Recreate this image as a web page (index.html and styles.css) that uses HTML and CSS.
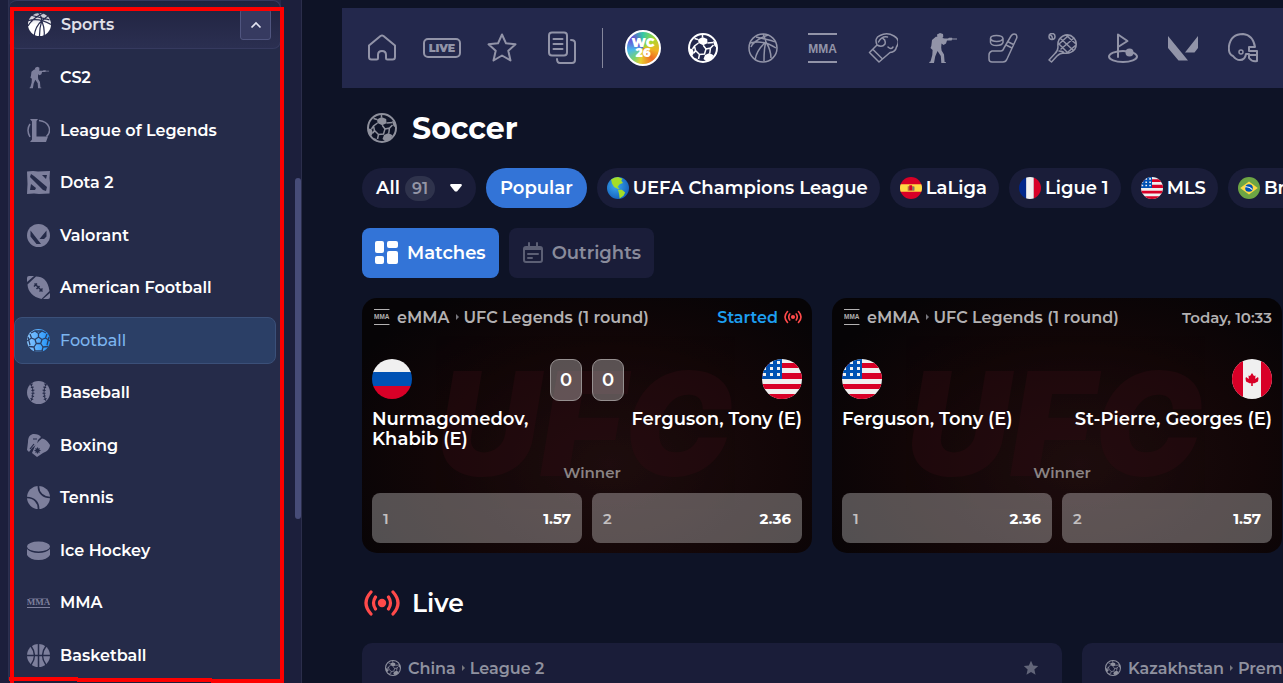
FILE: index.html
```
<!DOCTYPE html>
<html lang="en">
<head>
    <meta charset="UTF-8">
    <meta name="viewport" content="width=device-width, initial-scale=1.0">
    <title>Soccer</title>
    <link rel="stylesheet" href="styles.css">
</head>
<body>
    <!-- icon sprite -->
    <svg class="sprite" aria-hidden="true">
        <defs>
            <clipPath id="round"><circle cx="20" cy="20" r="20"/></clipPath>
            <linearGradient id="blue" x1="0" y1="0" x2="1" y2="0">
                <stop offset="0" stop-color="#8cc8ff"/><stop offset="1" stop-color="#1d92fb"/>
            </linearGradient>
            <linearGradient id="white" x1="0" y1="0" x2="0" y2="1">
                <stop offset="0" stop-color="#b9bac8"/><stop offset=".5" stop-color="#fff"/>
            </linearGradient>
            <radialGradient id="sea" cx=".4" cy=".4" r=".6">
                <stop offset="0" stop-color="#3ba9ee"/><stop offset="1" stop-color="#1765c0"/>
            </radialGradient>
        </defs>
        <symbol id="soccer" viewBox="0 0 30 30">
            <circle cx="15" cy="15" r="14" fill="none" stroke="currentColor" stroke-width="2"/>
            <path fill="currentColor" d="M10 6.500 14.500 4l4.700 2 .3 4.200-4.300 2L10.500 10zM17 22l4.500-2 4 2.200-2 4-5 2.300-3-2.500zM1 15.500l3.500.5 1.500 4-2 3-2-2zM25 8l3 1 1.200 6-2.700-2zM5 24.500l4.500 1.500v2.500z"/>
            <path fill="none" stroke="currentColor" stroke-width="1.500" d="M10.500 10 6.500 13l-2 3M10 6.500 6.500 5.500M19.500 10 25.500 9.500M15.200 12.200 18 16l-1.500 5-5 .5L7.500 17.500M6.500 13l1 4.500L6 20M18 16l4.500-1 3-3M22.500 15l-.7 5M11.500 21.500l-1 4.500M14.500 4V1.500"/>
        </symbol>
        <symbol id="basket" viewBox="0 0 30 30">
            <g fill="none" stroke="currentColor" stroke-width="1.500">
                <circle cx="15" cy="15" r="14"/>
                <path d="M2 10c8-2 17-1 26 5M8 4c8 2 16 3 19 5M20 2C12 5 5 9 3 14M15 1c2 4 3 7 3 10M18 9c-6 5-10 12-11 18M18 9c-2 5-2 12-2 19M18 9c3 5 5 10 5 16"/>
            </g>
        </symbol>
        <symbol id="mma" viewBox="0 0 30 30">
            <path fill="currentColor" d="M0 0h29v2H0zM0 28h29v2H0z"/>
            <text class="mma-text" x="14.500" y="19.500" text-anchor="middle">MMA</text>
        </symbol>
        <symbol id="shooter" viewBox="0 0 28 30">
            <path fill="currentColor" d="M8 1.500 11 0l3 1 .3 2.500L13.500 5l2 .5H19l1-.7h3l.3.8h4.700v.8h-5l-.4 1H18l-1 3-2.500 1.500-2-1.500-.3 4 .4 3 2.400 4 .6 7.500h1.200V30h-4.500l-.5-7-3.300-5-2.300 5.500L5 30H.3v-1l1.200-.6 1.800-6.500.3-5L1.500 15l.8-2 .7-6 3.800-3.200h1.500z"/>
        </symbol>
        <symbol id="cast" viewBox="0 0 36 26">
            <circle cx="18" cy="13" r="4.200" fill="currentColor"/>
            <path fill="none" stroke="currentColor" stroke-width="3.200" stroke-linecap="round" d="M11.500 7q-4 6 0 12M24.500 7q4 6 0 12M7 2q-10 11 0 22M29 2q10 11 0 22"/>
        </symbol>
        <symbol id="star" viewBox="0 0 30 30">
            <path d="M15 1.500l4 8.800 9.500 1-7.200 6.500 2.200 9.700-8.500-5-8.500 5 2.200-9.700-7.200-6.500 9.500-1z"/>
        </symbol>
        <symbol id="usa" viewBox="0 0 40 40">
            <g clip-path="url(#round)">
                <path fill="#f0f0f0" d="M0 0h40v40H0z"/>
                <path fill="#d80027" d="M0 4h40v5H0zM0 14h40v6H0zM0 25h40v5H0zM0 35h40v5H0z"/>
                <path fill="#0052b4" d="M0 0h20v20H0z"/>
                <path fill="none" stroke="#f0f0f0" stroke-width="3" stroke-dasharray="3 4" d="M8 3.500h12M1 9.500h19M1 15.500h19"/>
            </g>
        </symbol>
        <symbol id="canada" viewBox="0 0 40 40">
            <g clip-path="url(#round)">
                <path fill="#f0f0f0" d="M0 0h40v40H0z"/>
                <path fill="#d80027" d="M0 0h11v40H0zM29 0h11v40H29zM20 14l2 3 1.500-.5-.3 3.500 2.800-2 .5 1.500-.5 3-3.500 1.700h-1.700V27h-1.600v-2.800h-1.700L14 22.500l-.5-3 .5-1.500 2.800 2-.3-3.500 1.500.5z"/>
            </g>
        </symbol>
        <symbol id="russia" viewBox="0 0 40 40">
            <g clip-path="url(#round)"><path fill="#f0f0f0" d="M0 0h40v14H0z"/><path fill="#0052b4" d="M0 13h40v14H0z"/><path fill="#d80027" d="M0 27h40v13H0z"/></g>
        </symbol>
        <symbol id="spain" viewBox="0 0 40 40">
            <g clip-path="url(#round)"><path fill="#d80027" d="M0 0h40v40H0z"/><path fill="#ffda44" d="M0 13h40v14H0z"/><path fill="#b5763a" d="M14 17h12v8H14z"/><path fill="#d80027" d="M17 15h5v9h-5z"/><path fill="#777" d="M23 18h3v6h-3z"/></g>
        </symbol>
        <symbol id="france" viewBox="0 0 40 40">
            <g clip-path="url(#round)"><path fill="#00268a" d="M0 0h14v40H0z"/><path fill="#f0f0f0" d="M13 0h14v40H13z"/><path fill="#d80027" d="M27 0h13v40H27z"/></g>
        </symbol>
        <symbol id="brazil" viewBox="0 0 40 40">
            <g clip-path="url(#round)"><path fill="#6da544" d="M0 0h40v40H0z"/><path fill="#ffda44" d="M20 8l16 12-16 12L4 20z"/><circle cx="20" cy="20" r="7" fill="#0052b4"/><path fill="none" stroke="#f0f0f0" stroke-width="2" d="M13 18q8-1 13 5"/></g>
        </symbol>
        <symbol id="globe" viewBox="0 0 40 40">
            <circle cx="20" cy="20" r="20" fill="url(#sea)"/>
            <path fill="#a4dd28" d="M7 5Q13 0 20 0l8 3-2 4 3 4-6 2-4 5 4 3-3 1-7-4-4-6-1-5zM20 23h7l6 5-3 6-7 5-1-8z"/>
        </symbol>
    </svg>

    <aside class="sidebar">
        <div class="panel">
            <div class="panel-header">
                <svg class="ico" viewBox="0 0 30 30"><circle cx="15" cy="15" r="15" fill="url(#white)"/><path fill="none" stroke="#2a2e50" stroke-width="1.600" d="M0 10c10-3 20-1 30 5M5 3c8 3 18 4 23 6M20 0C12 4 4 10 0 17M14 0c3 4 4 7 4 10M18 10C12 15 9 22 8 30M18 10c-2 6-3 13-3 20M18 10c2 5 4 12 3 20M18 10l8-6"/></svg>
                <span>Sports</span>
                <button class="toggle" aria-label="Collapse sports"><svg width="12" height="8" viewBox="0 0 12 8"><path fill="none" stroke="#e4e5f2" stroke-width="1.700" d="M1.500 6.500 6 2l4.500 4.500"/></svg></button>
            </div>
            <ul class="sports">
                <li><a href="#"><svg class="ico" viewBox="-2 0 28 30"><use href="#shooter" width="26" height="30"/></svg>CS2</a></li>
                <li><a href="#"><svg class="ico" viewBox="0 0 23 23"><path fill="currentColor" d="M3 0h8l-1.500 2v15.500H21L19 23H3l2-2.500V2.500z"/><path fill="none" stroke="currentColor" stroke-width="1.500" d="M3 5q-4 6 0 13M12 1.500c11 1 13 11 7.500 16"/></svg>League of Legends</a></li>
                <li><a href="#"><svg class="ico" viewBox="0 0 23 23"><path fill="currentColor" fill-rule="evenodd" d="M0 .5 6 0l5 .5L23 0l-.5 7 .5 5-.5 10.500L12 23l-5-.5L0 23l.5-10zM4 3 3 6l13 13 3 1 1-4L7 5zM15 4l4 4 1-4zM4 13l-1 6h5l1-2z"/></svg>Dota 2</a></li>
                <li><a href="#"><svg class="ico" viewBox="0 0 23 23"><circle cx="11.500" cy="11.500" r="11.500" fill="currentColor"/><path fill="#252b49" d="M3.500 6.500v6l6 7.500h4.500zM19.500 6.500v6l-2.500 2.500h-4.500z"/></svg>Valorant</a></li>
                <li><a href="#"><svg class="ico" viewBox="0 0 23 23"><path fill="currentColor" d="M0 6V2q0-2 2-2h5zM23 17v4q0 2-2 2h-5zM9 0.500c7 0 12 4 13.500 14.500l-8 8C6 21 1 16 .5 8.500z"/><path fill="none" stroke="#252b49" stroke-width="1.500" d="m7.500 7.500 8 8M7 10.500 10 7.500M9.500 13l3-3M12.500 15.500l3-3"/></svg>American Football</a></li>
                <li><a class="active" href="#"><svg class="ico" viewBox="0 0 23 23"><circle cx="11.500" cy="11.500" r="11.500" fill="url(#blue)"/><path fill="none" stroke="#2b3f66" stroke-width="1.300" d="m11.500 8 3.500 2.500-1.300 4H9.300L8 10.500zM11.500 8V4.500L8 2M11.500 4.500 15 2M15 10.500l3.500-1.500L20 5M18.500 9l4.500 3M13.700 14.500l2.300 3.500-1 4M16 18l5-.5M9.300 14.500 7 18l1 4M7 18l-5-.5M8 10.500 4.500 9 3 5M4.500 9 0 12M4 4 8 2h7l4 2M1 8l2 8M22 8l-2 8M7 22h9"/></svg>Football</a></li>
                <li><a href="#"><svg class="ico" viewBox="0 0 23 23"><circle cx="11.500" cy="11.500" r="11.500" fill="currentColor"/><path fill="none" stroke="#252b49" stroke-width="1" d="M4 3q4 8.500 0 17M19 3q-4 8.500 0 17"/><path fill="none" stroke="#252b49" stroke-width="3" stroke-dasharray="1 2" d="M4 3q4 8.500 0 17M19 3q-4 8.500 0 17"/></svg>Baseball</a></li>
                <li><a href="#"><svg class="ico" viewBox="0 0 23 23"><path fill="currentColor" d="M1 8C1 2 4 0 7 0q5 0 7 3l-3 3-1 4-5 4-3 4-2-2zM12 7l3-2.500q4 0 8 6.500 0 5-7 8l-6 4-5-4 3-7z"/><path fill="none" stroke="#252b49" stroke-width="1.200" d="M3 15l4-5M10.500 13.500v6M7.500 16.500h6M8.500 14.500l4 4M12.500 14.500l-4 4M6 5h4"/></svg>Boxing</a></li>
                <li><a href="#"><svg class="ico" viewBox="0 0 23 23"><circle cx="11.500" cy="11.500" r="11.500" fill="currentColor"/><path fill="none" stroke="#252b49" stroke-width="1.700" d="M11.500 0c-.5 7 5 11.500 12 11.500M0 11.500c7 0 12 5 11.500 12"/></svg>Tennis</a></li>
                <li><a href="#"><svg class="ico" viewBox="0 0 23 23"><ellipse cx="11.500" cy="7.500" rx="11.500" ry="5" fill="currentColor"/><path fill="currentColor" d="M0 10q4 4 11.500 4T23 10v6q-3 5-11.500 5T0 16z"/></svg>Ice Hockey</a></li>
                <li><a href="#"><svg class="ico" viewBox="0 0 23 23"><text class="mma-small" x="11.500" y="14" text-anchor="middle">MMA</text><path fill="currentColor" d="M0 16h23v1H0zM2 7h19v.6H2z"/></svg>MMA</a></li>
                <li><a href="#"><svg class="ico" viewBox="0 0 23 23"><circle cx="11.500" cy="11.500" r="11.500" fill="currentColor"/><path fill="none" stroke="#252b49" stroke-width="1.500" d="M11.500 0v23M0 11.500h23M4 2q7 9.500 0 19M19 2q-7 9.500 0 19"/></svg>Basketball</a></li>
            </ul>
        </div>
        <span class="thumb"></span>
        <span class="frame"></span>
        <svg class="frame-bottom" viewBox="0 0 275 7"><path fill="#fe0000" d="M0 1h69v4H0zM68 2h135v4H68zM202 3h73v4h-73z"/></svg>
    </aside>

    <main class="main">
        <nav class="topbar">
            <a href="#" aria-label="Home"><svg width="30" height="30" viewBox="0 0 30 30"><path class="line" d="M2 12.500 13.500 3q1.500-1 3 0L28 12.500V24q0 2.500-2.500 2.500h-5q-1.500 0-1.500-1.500v-3q0-4-4-4t-4 4v3q0 1.500-1.500 1.500h-5Q2 26.500 2 24z"/></svg></a>
            <a href="#" aria-label="Live"><svg width="38" height="20" viewBox="0 0 38 20"><rect class="line" x="1" y="1" width="36" height="18" rx="4"/><text class="live-text" x="19" y="14" text-anchor="middle">LIVE</text></svg></a>
            <a href="#" aria-label="Favourites"><svg class="line" width="30" height="30"><use href="#star"/></svg></a>
            <a href="#" aria-label="Bets"><svg width="30" height="34" viewBox="0 0 30 34"><path class="line" d="M5 1.500h12q3 0 3 3v17q0 3-3 3H5q-3 0-3-3v-17q0-3 3-3zM24 9q4 0 4 3v17q0 3-3 3H13q-3 0-3-4M6.500 8h9M6.500 13h9M6.500 18h9"/></svg></a>
            <span class="divider"></span>
            <a href="#" aria-label="World Cup"><span class="wc"><span>WC</span><span>26</span></span></a>
            <a href="#" aria-label="Soccer" class="current"><svg width="30" height="30"><use href="#soccer"/></svg></a>
            <a href="#" aria-label="Basketball"><svg width="30" height="30"><use href="#basket"/></svg></a>
            <a href="#" aria-label="MMA"><svg width="30" height="30"><use href="#mma"/></svg></a>
            <a href="#" aria-label="Boxing"><svg width="30" height="30" viewBox="0 0 30 30"><path class="thin" d="M1.500 19.500 9 12Q6 5 12 2.500 19-1 26 3t2.500 11q-1 5-6.500 5.500L11 29zM9 12q5 3 8-1 1-4-2-5.500M10.500 9q3-6 9-5M5 16.500l9 9M20 14q3 3 5 0"/></svg></a>
            <a href="#" aria-label="CS2"><svg width="28" height="30"><use href="#shooter"/></svg></a>
            <a href="#" aria-label="Ice hockey"><svg width="30" height="30" viewBox="0 0 30 30"><path class="thin" d="M23 3q2-3 5-1.500 1.500 2 .5 4L19 26q-1 3-4 3H4q-3 0-3-3v-4q0-3 3-4h9q2 0 3-3zM20.500 9l5 2.500M19 12.500l5 2.500M2.500 5.500q0-3 6-3t6.500 3v4q-1 3-6.500 3t-6-3zM2.500 5.500q1 3 6.200 3T15 5.500"/></svg></a>
            <a href="#" aria-label="Tennis"><svg width="30" height="30" viewBox="0 0 30 30"><path class="thin" d="M10 14Q9 6 15 3q6-3 11 2 4 5 1 11-4 5-11 4-4 0-7 3l-5.500 6L1 27l5.500-6Q10 18 10 14zM11 18q4 0 5 2M13 16 26 5M11 11l9-8M20 19l8-7M13 6l12 11M11 11l8 8M19 3l9 8"/><path class="thin" d="M1 3.500q0-3 3-3t3 3-3 3-3-3M2.500 2q2 1 2 4"/></svg></a>
            <a href="#" aria-label="Golf"><svg width="30" height="30" viewBox="0 0 30 30"><ellipse class="line" cx="15" cy="23.500" rx="14" ry="5.500"/><path class="line" d="M10 24V1.500L19.500 8 10 14"/><circle cx="21.500" cy="19.500" r="4" fill="currentColor"/></svg></a>
            <a href="#" aria-label="Valorant"><svg width="30" height="30" viewBox="0 0 30 30"><path fill="currentColor" d="M0 3v12l10.500 12.500H20zM30 3v12l-3.500 4.500H17z"/></svg></a>
            <a href="#" aria-label="American football"><svg width="30" height="30" viewBox="0 0 30 30"><path class="line" d="M5 23Q0 21 1 13 3 1 15 1q10 1 12 13h-6v4h8v10q-5 1-8-3v-4h-3q-1 6-6 6-4 0-7-4zM21 22h8"/><circle class="thin" cx="13" cy="19" r="2"/></svg></a>
        </nav>

        <div class="content">
            <h1><svg width="30" height="30"><use href="#soccer"/></svg>Soccer</h1>

            <div class="chips">
                <button class="chip all">All <span class="count">91</span><svg class="caret" width="12" height="8" viewBox="0 0 12 8"><path fill="currentColor" d="M1 0h10q1.500.5.500 2L7 7.500H5L.5 2Q-.5.500 1 0z"/></svg></button>
                <button class="chip selected">Popular</button>
                <button class="chip league"><svg width="22" height="22"><use href="#globe"/></svg>UEFA Champions League</button>
                <button class="chip league"><svg width="22" height="22"><use href="#spain"/></svg>LaLiga</button>
                <button class="chip league"><svg width="22" height="22"><use href="#france"/></svg>Ligue 1</button>
                <button class="chip league"><svg width="22" height="22"><use href="#usa"/></svg>MLS</button>
                <button class="chip league"><svg width="22" height="22"><use href="#brazil"/></svg>Brasileiro</button>
            </div>

            <div class="tabs">
                <button class="tab selected"><svg width="24" height="24" viewBox="0 0 24 24"><g fill="currentColor"><rect width="9" height="12" rx="2"/><rect y="15" width="9" height="8" rx="2"/><rect x="12" width="11" height="7" rx="2"/><rect x="12" y="10" width="11" height="13" rx="2"/></g></svg>Matches</button>
                <button class="tab"><svg width="22" height="22" viewBox="0 0 22 22"><path class="line" d="M4 5h14q2 0 2 2v11q0 2-2 2H4q-2 0-2-2V7q0-2 2-2zM2 7h18M7 1v4M15 1v4M6 12h10M6 16h4"/></svg>Outrights</button>
            </div>

            <div class="matches">
                <article class="match">
                    <span class="mark" aria-hidden="true">UFC</span>
                    <div class="match-head">
                        <svg width="16" height="16"><use href="#mma"/></svg>
                        <span>eMMA</span><i class="arrow"></i><span>UFC Legends (1 round)</span>
                        <span class="started">Started<svg width="18" height="14"><use href="#cast"/></svg></span>
                    </div>
                    <div class="teams">
                        <div class="team"><svg width="40" height="40"><use href="#russia"/></svg><span>Nurmagomedov, Khabib (E)</span></div>
                        <div class="scores"><span>0</span><span>0</span></div>
                        <div class="team away"><svg width="40" height="40"><use href="#usa"/></svg><span>Ferguson, Tony (E)</span></div>
                    </div>
                    <div class="market">Winner</div>
                    <div class="odds">
                        <button><span>1</span><b>1.57</b></button>
                        <button><span>2</span><b>2.36</b></button>
                    </div>
                </article>
                <article class="match">
                    <span class="mark" aria-hidden="true">UFC</span>
                    <div class="match-head">
                        <svg width="16" height="16"><use href="#mma"/></svg>
                        <span>eMMA</span><i class="arrow"></i><span>UFC Legends (1 round)</span>
                        <span class="when">Today, 10:33</span>
                    </div>
                    <div class="teams">
                        <div class="team"><svg width="40" height="40"><use href="#usa"/></svg><span>Ferguson, Tony (E)</span></div>
                        <div class="team away"><svg width="40" height="40"><use href="#canada"/></svg><span>St-Pierre, Georges (E)</span></div>
                    </div>
                    <div class="market">Winner</div>
                    <div class="odds">
                        <button><span>1</span><b>2.36</b></button>
                        <button><span>2</span><b>1.57</b></button>
                    </div>
                </article>
            </div>

            <h2><svg width="36" height="26"><use href="#cast"/></svg>Live</h2>

            <div class="live">
                <section class="league-card">
                    <svg width="16" height="16"><use href="#soccer"/></svg>
                    <span>China</span><i class="arrow"></i><span>League 2</span>
                    <button class="fav" aria-label="Add to favourites"><svg width="16" height="16"><use href="#star"/></svg></button>
                </section>
                <section class="league-card">
                    <svg width="16" height="16"><use href="#soccer"/></svg>
                    <span>Kazakhstan</span><i class="arrow"></i><span>Premier League</span>
                </section>
            </div>
        </div>
    </main>
</body>
</html>
```
FILE: styles.css
```
* {
    box-sizing: border-box;
}
body {
    margin: 0;
    display: flex;
    height: 100vh;
    overflow: hidden;
    background: #0e1326;
    color: #fff;
    font-family: Montserrat, Inter, sans-serif;
    font-size: 16px;
    font-weight: 600;
}
a {
    color: inherit;
    text-decoration: none;
}
button {
    border: 0;
    padding: 0;
    color: inherit;
    font: inherit;
    cursor: pointer;
}
svg {
    display: block;
    flex: none;
}
.sprite {
    position: absolute;
    width: 0;
    height: 0;
}

/* sidebar */
.sidebar {
    position: relative;
    flex: none;
    width: 302px;
    padding: 0 20px 3px 8px;
    background: #1c1f3c;
    border-right: 1px solid #2b2e4b;
}
.panel {
    display: flex;
    flex-direction: column;
    height: 100%;
    background: #252b49;
    border-left: 1px solid #2c3050;
}
.panel-header {
    display: flex;
    align-items: center;
    height: 49px;
    padding: 0 9px 0 19px;
    gap: 10px;
    background: linear-gradient(#20233f, #2b2f51);
    border: 1px solid #363a5f;
    border-left: 0;
    border-radius: 8px;
    color: #e0e0e8;
}
.toggle {
    display: flex;
    align-items: center;
    justify-content: center;
    width: 31px;
    height: 31px;
    margin-left: auto;
    background: #363a60;
    border: 1px solid #50557f;
    border-radius: 3px;
}
.ico {
    width: 23px;
    height: 23px;
}
.sports {
    display: flex;
    flex: 1;
    flex-direction: column;
    justify-content: space-between;
    margin: 0;
    padding: 5px 5px 1px;
    list-style: none;
}
.sports a {
    display: flex;
    align-items: center;
    gap: 10px;
    height: 47px;
    padding: 0 12px;
    border: 1px solid transparent;
    border-radius: 8px;
}
.sports .ico {
    color: #7d7f9c;
}
.sports .active {
    background: #2b3f66;
    border-color: #3b5079;
    color: #7cb5ef;
    font-weight: 500;
}
.mma-small {
    fill: currentColor;
    font: 700 9px "Liberation Serif", serif;
}
.thumb {
    position: absolute;
    top: 178px;
    right: 0;
    width: 6px;
    height: 341px;
    background: #474c78;
    border-radius: 3px;
}
.frame {
    position: absolute;
    top: 7px;
    left: 10px;
    right: 17px;
    bottom: 0;
    border: 4px solid #fe0000;
    border-bottom: 0;
}
.frame-bottom {
    position: absolute;
    left: 9px;
    bottom: 0;
    width: 275px;
    height: 7px;
}

/* top navigation */
.main {
    flex: 1;
    min-width: 0;
    padding: 8px 0 0 40px;
    overflow: hidden;
}
.topbar {
    display: flex;
    align-items: center;
    height: 80px;
    padding-left: 10px;
    background: #23284c;
    color: #9294a8;
}
.topbar a {
    display: flex;
    flex: none;
    align-items: center;
    justify-content: center;
    width: 60px;
    height: 60px;
}
.topbar .current {
    color: #fff;
}
.divider {
    flex: none;
    width: 1px;
    height: 40px;
    margin: 0 10px;
    background: #85879c;
}
.line, .thin {
    fill: none;
    stroke: currentColor;
    stroke-width: 2px;
    stroke-linecap: round;
    stroke-linejoin: round;
}
.topbar .thin {
    stroke-width: 1.5px;
}
.live-text {
    fill: currentColor;
    font: 900 11px Montserrat, Inter, sans-serif;
}
.mma-text {
    fill: currentColor;
    font: 700 12px "Liberation Sans", sans-serif;
}
.wc {
    display: flex;
    flex-direction: column;
    align-items: center;
    justify-content: center;
    width: 36px;
    height: 36px;
    border: 2px solid #fff;
    border-radius: 50%;
    background: conic-gradient(from 0deg, #35c9a5, #a5d931, #f0b323 100deg, #ee6a22 140deg, #e9cf2f 190deg, #79d26f 220deg, #49b9e8 260deg, #6a46d5 310deg, #35c9a5);
    color: #fff;
    font: 900 12px/10px Montserrat, Inter, sans-serif;
}

/* content */
.content {
    padding-left: 20px;
}
h1, h2 {
    display: flex;
    align-items: center;
    margin: 0;
}
h1 {
    height: 80px;
    padding-left: 5px;
    gap: 15px;
    font-size: 30px;
    font-weight: 700;
}
h1 svg {
    color: #8e909c;
}
h2 {
    height: 90px;
    padding: 10px 0 0 2px;
    gap: 12px;
    font-size: 25px;
    font-weight: 600;
}
h2 svg {
    color: #ff4a4a;
}
.chips, .tabs {
    display: flex;
    gap: 10px;
    margin-bottom: 20px;
}
.chip {
    display: flex;
    flex: none;
    align-items: center;
    height: 40px;
    padding: 0 14px;
    background: #1a1d39;
    border-radius: 20px;
    font-size: 18px;
}
.league {
    gap: 4px;
    padding: 0 12px 0 10px;
}
.count {
    height: 25px;
    margin: 0 15px 0 5px;
    padding: 0 7px;
    background: #2f334c;
    border-radius: 13px;
    color: #9496a5;
    font-size: 16px;
    line-height: 25px;
}
.tab {
    display: flex;
    align-items: center;
    gap: 8px;
    height: 50px;
    padding: 0 13px;
    background: #1a1d39;
    border-radius: 8px;
    color: #898b9b;
    font-size: 18px;
}
.tab svg {
    color: #5c5f74;
}
.selected, .selected svg {
    color: #fff;
}
.selected {
    background: #3374d7;
}

/* match cards */
.matches, .live {
    display: flex;
    gap: 20px;
}
.match {
    position: relative;
    flex: 0 0 450px;
    padding: 9px 10px 10px;
    overflow: hidden;
    background: radial-gradient(ellipse at 55% 65%, #1e0d0e, #120607 50%, #060406 85%);
    border-radius: 15px;
}
.mark {
    position: absolute;
    top: 46px;
    left: 74px;
    color: #2b0b10;
    font: italic 900 144px/160px Inter, sans-serif;
    opacity: .5;
}
.match-head, .league-card {
    display: flex;
    align-items: center;
}
.match-head {
    position: relative;
    height: 20px;
    padding-left: 2px;
    color: #b3b1b2;
}
.match-head > svg, .league-card > svg {
    margin-right: 7px;
}
.arrow {
    margin: 0 5px 0 6px;
    border: 3px solid transparent;
    border-right: 0;
    border-left-color: #77767c;
}
.started, .when {
    display: flex;
    align-items: center;
    gap: 6px;
    margin-left: auto;
}
.when {
    font-size: 15px;
}
.started {
    color: #1d9ff0;
}
.started svg {
    color: #ff4a4a;
}
.teams {
    position: relative;
    display: flex;
    justify-content: space-between;
    min-height: 90px;
    margin: 32px 0 14px;
    font-size: 18px;
    line-height: 20px;
}
.team {
    display: flex;
    flex: 1;
    flex-direction: column;
    gap: 10px;
}
.away {
    align-items: flex-end;
    text-align: right;
}
.scores {
    display: flex;
    gap: 10px;
}
.scores span {
    width: 32px;
    height: 42px;
    background: rgba(255, 255, 255, .3);
    border: 1px solid #969090;
    border-radius: 9px;
    line-height: 40px;
    text-align: center;
}
.market {
    position: relative;
    padding-left: 10px;
    color: #8a8384;
    font-size: 15px;
    line-height: 20px;
    text-align: center;
}
.odds {
    position: relative;
    display: flex;
    gap: 10px;
    margin-top: 10px;
}
.odds button {
    display: flex;
    flex: 1;
    align-items: center;
    justify-content: space-between;
    height: 50px;
    padding: 0 11px;
    background: rgba(255, 255, 255, .3);
    border-radius: 8px;
    font-size: 15px;
}
.odds span {
    color: #c4c0c0;
}
.odds b {
    font-weight: 700;
}

/* live leagues */
.league-card {
    flex: 0 0 700px;
    height: 50px;
    padding: 0 23px;
    background: #1a1d39;
    border-radius: 10px 10px 0 0;
    color: #8f919f;
}
.fav {
    margin-left: auto;
    background: none;
    color: #626579;
    fill: currentColor;
}
```
